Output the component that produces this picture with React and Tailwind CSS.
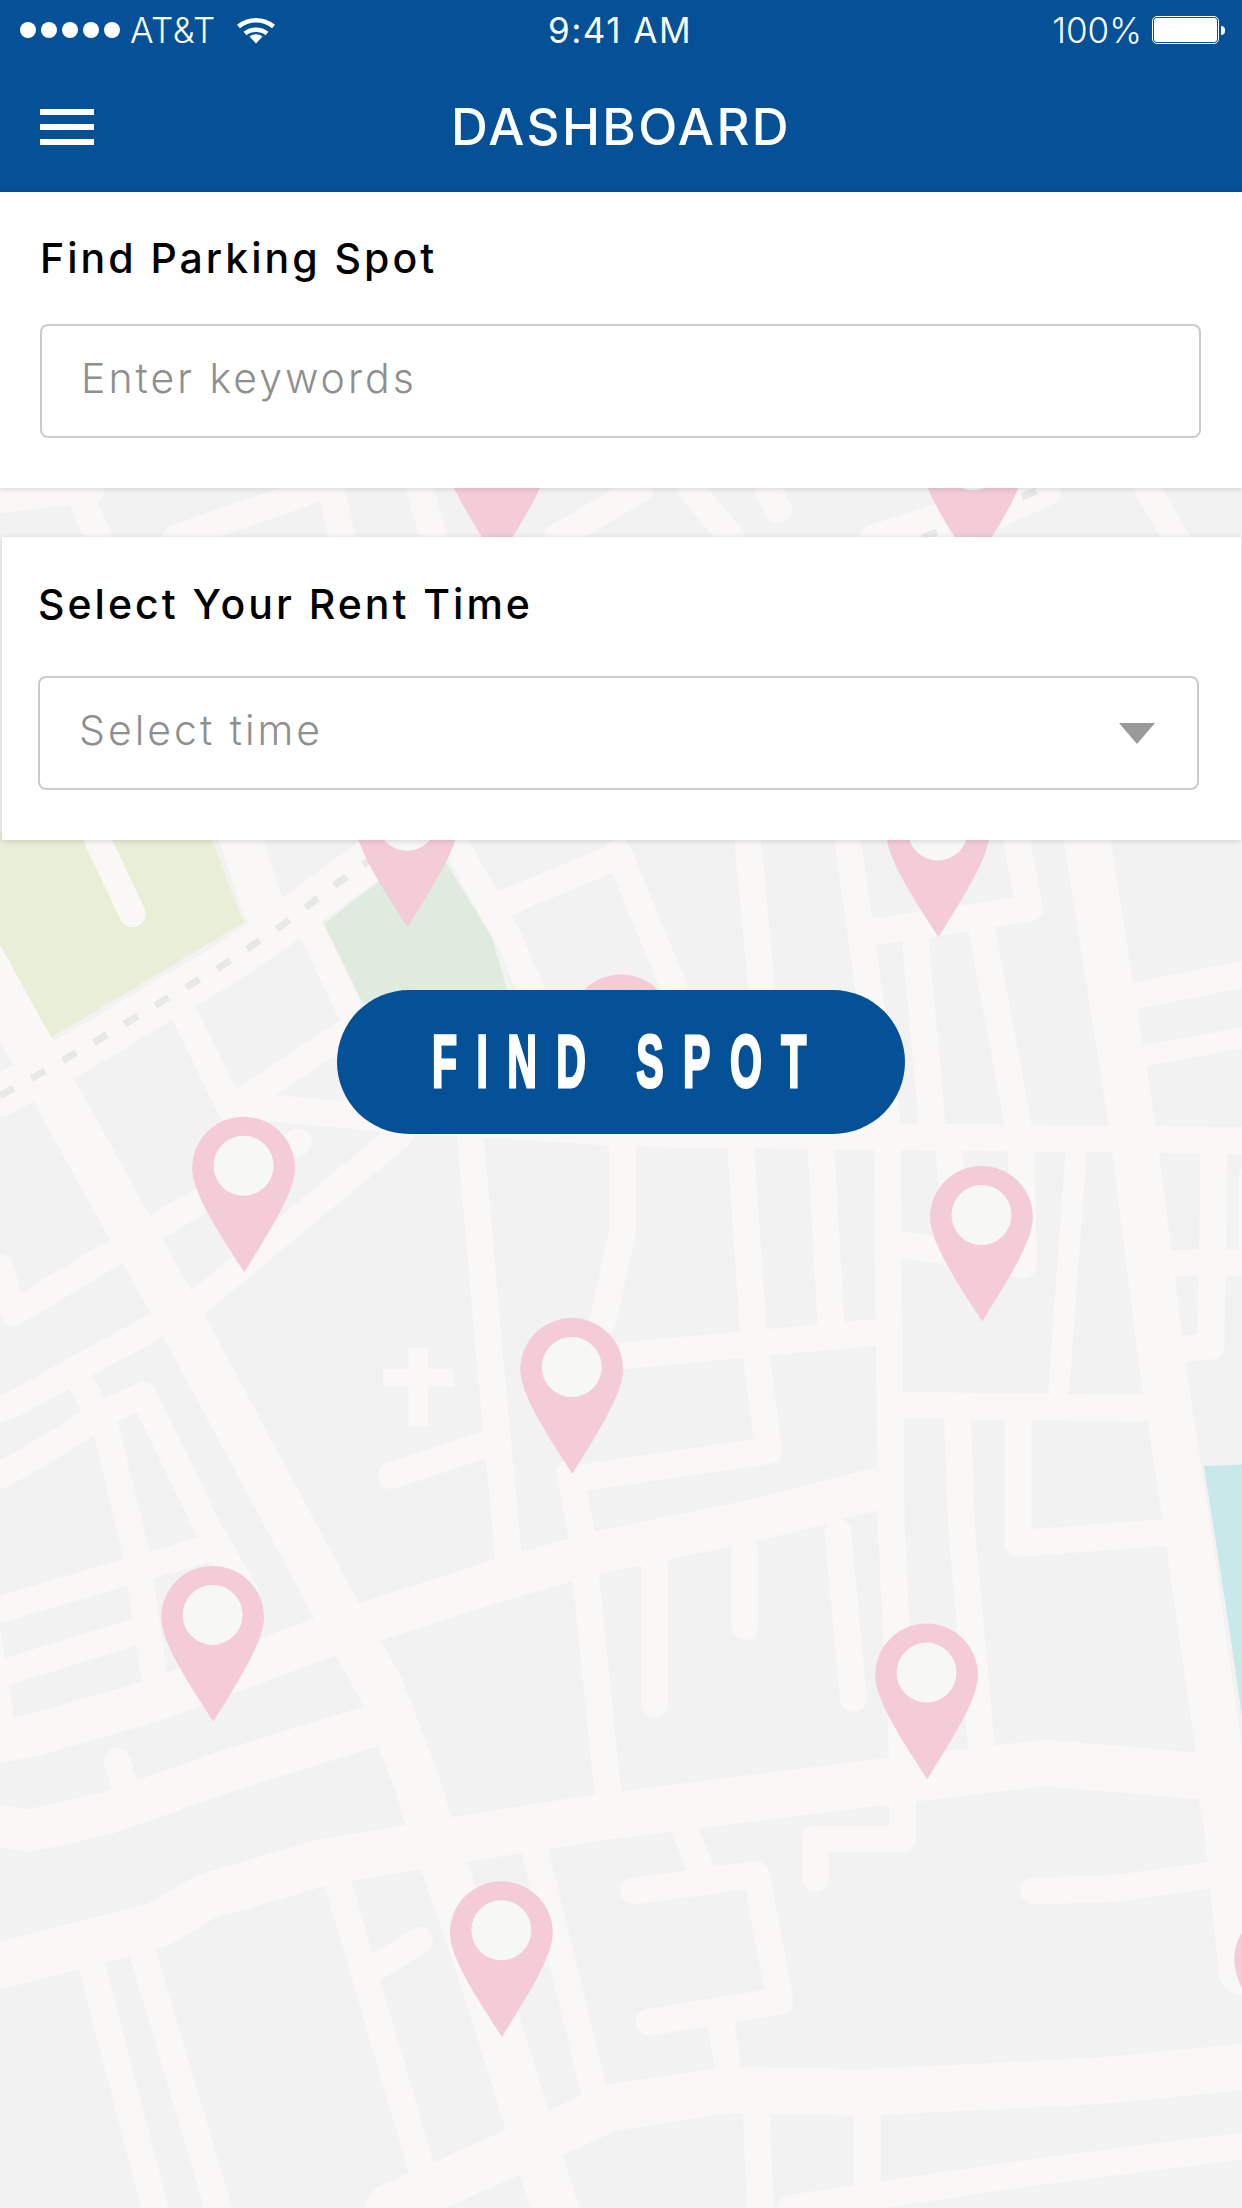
const thin = [
  [[764, 820], [752, 985]],
  [[812, 750], [882, 737]],
]

const narrow = [
  // upper area
  [[69, 596], [94, 649]],
  [[132, 722], [163, 786]],
  [[222, 662], [248, 717]],
  [[165, 787], [262, 722]],
  [[284, 806], [127, 936]],
  [[322, 597], [362, 668], [377, 703]],
  [[439, 605], [478, 700]],
  [[439, 608], [357, 642]],
  [[531, 597], [541, 703]],
  [[602, 597], [617, 703], [630, 795]],
  [[620, 662], [731, 645], [722, 597]],
  [[650, 668], [662, 798]],
  [[697, 659], [723, 799]],
  [[806, 707], [882, 692]],
  // horizontal below the button
  [[170, 785], [260, 793], [450, 805], [882, 810]],
  // verticals in the middle
  [[334, 807], [348, 966], [361, 1105]],
  [[442, 811], [442, 875], [428, 938]],
  [[526, 815], [535, 945]],
  [[537, 963], [546, 1030], [416, 1049]],
  [[583, 815], [590, 939]],
  [[630, 818], [633, 1087], [641, 1248]],
  [[674, 818], [679, 875]],
  [[641, 884], [727, 898], [725, 820]],
  [[439, 963], [624, 946]],
  [[641, 998], [816, 1000]],
  [[832, 897], [882, 897]],
  [[862, 820], [860, 956], [838, 958]],
  [[889, 836], [889, 890]],
  [[680, 1008], [683, 1087], [697, 1241]],
  [[723, 1008], [723, 1096], [832, 1088]],
  [[278, 1048], [344, 1026]],
  [[405, 1046], [413, 1090]],
  [[416, 1120], [432, 1277]],
  [[465, 1113], [465, 1210]],
  [[529, 1100], [529, 1155]],
  [[595, 1088], [606, 1206]],
  // left side
  [[0, 900], [10, 932], [212, 811]],
  [[0, 1048], [20, 1037], [62, 1011], [79, 1001], [102, 991], [147, 1084], [175, 1132]],
  [[0, 1001], [14, 995], [62, 968], [110, 942]],
  [[57, 981], [75, 1014], [97, 1104], [109, 1188]],
  [[0, 1143], [91, 1116], [147, 1100]],
  [[5, 1187], [102, 1157]],
  [[-10, 1153], [0, 1217]],
  [[83, 1251], [91, 1276]],
  // lower area
  [[66, 1399], [110, 1568]],
  [[101, 1386], [155, 1568]],
  [[239, 1334], [301, 1546]],
  [[315, 1325], [371, 1504], [399, 1568]],
  [[380, 1315], [422, 1485]],
  [[264, 1399], [298, 1378]],
  [[450, 1343], [537, 1331], [554, 1421], [461, 1436]],
  [[487, 1301], [498, 1328]],
  [[512, 1437], [517, 1468]],
  [[579, 1334], [579, 1306], [641, 1306], [641, 1280]],
  [[734, 1343], [793, 1341], [872, 1330]],
  [[861, 1280], [882, 1370]],
  [[537, 1501], [540, 1568]],
  [[616, 1503], [616, 1556]],
  [[562, 1568], [731, 1543], [882, 1524]],
  // strip between the two cards
  [[0, 355], [65, 347]],
  [[55, 347], [70, 382]],
  [[125, 382], [225, 347]],
  [[235, 347], [243, 382]],
  [[298, 347], [308, 382]],
  [[395, 382], [455, 347]],
  [[490, 347], [520, 382]],
  [[545, 347], [553, 362]],
  [[620, 382], [730, 347]],
  [[815, 347], [835, 382]],
]

const mid = [
  [[169, 590], [187, 644]],
  [[0, 1237], [24, 1232], [111, 1207], [237, 1160], [355, 1122], [422, 1103], [534, 1080], [620, 1058]],
  [[0, 1297], [21, 1300], [78, 1287], [166, 1256], [260, 1227], [272, 1224]],
  [[0, 778], [24, 765], [69, 739], [112, 713], [156, 687], [199, 658], [240, 627], [262, 611]],
]

const wide = [
  [[-15, 678], [42, 781], [127, 935], [238, 1142], [270, 1198], [296, 1266], [304, 1293], [337, 1386], [394, 1568]],
  [[0, 1396], [112, 1367], [146, 1347], [231, 1322], [292, 1312], [422, 1291], [630, 1265], [742, 1252], [861, 1262], [882, 1263]],
  [[276, 1568], [354, 1533], [433, 1497], [517, 1484], [613, 1486], [776, 1478], [882, 1468]],
  [[771, 590], [804, 799], [825, 966], [840, 1065], [866, 1245], [882, 1400]],
]

const pins = [
  [289, 548], [666, 555], [441, 692],
  [173, 793], [697, 828], [406, 936],
  [151, 1112], [658, 1153], [356, 1336], [913, 1355],
  [353, 288], [691, 292],
]

const toPoints = (line) => line.map((p) => p.join(',')).join(' ')

const Roads = ({ lines, width }) =>
  lines.map((line, i) => <polyline key={i} points={toPoints(line)} strokeWidth={width} />)

const MapBackground = () => (
  <svg viewBox="0 0 882 1568" className="absolute inset-0 h-full w-full" preserveAspectRatio="none">
    <rect width="882" height="1568" fill="#f2f2f2" />
    <polygon points="0,590 148,590 173,655 36,737 0,672" fill="#e9eed6" />
    <polygon points="230,656 269,626 317,613 349,665 360,703 258,713" fill="#e0ebdf" />
    <polygon points="855,1041 882,1040 882,1219 872,1150" fill="#c8e8e9" />
    <g fill="none" stroke="#f9f8f6" strokeLinecap="round" strokeLinejoin="round">
      <Roads lines={thin} width={15} />
      <Roads lines={narrow} width={19} />
      <Roads lines={mid} width={30} />
      <Roads lines={wide} width={33} />
      <polyline points="660,382 740,347" strokeWidth="27" />
    </g>
    <g fill="none" stroke="#e8e8e6" strokeWidth="5">
      <polyline points={toPoints(mid[3])} strokeDasharray="11 14.5" />
      <polyline points="655,382 740,347" strokeDasharray="11 14.5" />
    </g>
    <rect x="272" y="972" width="50" height="13" fill="#f9f8f6" />
    <rect x="290" y="957" width="14" height="56" fill="#f9f8f6" />
    {pins.map(([x, y], i) => (
      <g key={i} transform={`translate(${x} ${y})`}>
        <path d="M0.5 110.5C-18 82-36.5 54-36.5 36.5A36.5 36.5 0 0 1 36.5 36.5C36.5 54 18 82 0.5 110.5Z" fill="#f3ccd8" />
        <circle cx="0" cy="34.8" r="21.3" fill="#f7f8f3" />
      </g>
    ))}
  </svg>
)

const StatusBar = () => (
  <div className="relative flex h-[60px] items-center justify-between text-[35px] font-light leading-none text-white">
    <div className="flex items-center pl-[20px]">
      <div className="flex gap-[5px]">
        <span className="h-4 w-4 rounded-full bg-white" />
        <span className="h-4 w-4 rounded-full bg-white" />
        <span className="h-4 w-4 rounded-full bg-white" />
        <span className="h-4 w-4 rounded-full bg-white" />
        <span className="h-4 w-4 rounded-full bg-white" />
      </div>
      <span className="ml-[10px] tracking-[0.5px]">AT&amp;T</span>
      <svg viewBox="0 0 38 27" className="ml-[21px] h-[27px] w-[38px]" fill="none" stroke="#fff" strokeWidth="4.5">
        <path d="M1.5 9.5C11.5 1 26.5 1 36.5 9.5" />
        <path d="M8 16.5C14 11.5 24 11.5 30 16.5" />
        <path d="M12.5 19.5L19 26.5L25.5 19.5C21.5 16.5 16.5 16.5 12.5 19.5Z" fill="#fff" stroke="none" />
      </svg>
    </div>
    <span className="absolute left-[548px] font-normal tracking-[1.5px]">9:41 AM</span>
    <div className="flex items-center pr-[17px]">
      <span>100%</span>
      <div className="ml-[10px] flex h-[28px] w-[67px] rounded-[5px] border border-white p-[1px]">
        <span className="w-full rounded-[3px] bg-white" />
      </div>
      <span className="ml-[2px] h-[9px] w-[4px] rounded-r-full bg-white" />
    </div>
  </div>
)

const Field = ({ label, placeholder, arrow, gap }) => (
  <>
    <div className="text-[41px] font-medium leading-none tracking-[3px] text-black">{label}</div>
    <div className={`${gap} flex h-[114px] items-center justify-between rounded-[8px] border-2 border-[#cbcbcb] bg-white pl-[39px] pr-[42px] text-[41px] font-light leading-none tracking-[3px] text-[#8f8f8f]`}>
      <span className="pb-[5px]">{placeholder}</span>
      {arrow && <span className="h-0 w-0 border-x-[18px] border-t-[21px] border-x-transparent border-t-[#999999]" />}
    </div>
  </>
)

export default function App() {
  return (
    <div className="relative h-[2208px] w-[1242px] overflow-hidden bg-[#f2f2f2] font-['Inter','Liberation_Sans',sans-serif]">
      <MapBackground />
      <div className="relative flex flex-col">
        <header className="h-[192px] bg-[#045198]">
          <StatusBar />
          <div className="relative flex h-[132px] items-center justify-center">
            <div className="absolute left-[40px] top-[49px] flex w-[54px] flex-col gap-[9px]">
              <span className="h-[6px] bg-white" />
              <span className="h-[6px] bg-white" />
              <span className="h-[6px] bg-white" />
            </div>
            <h1 className="text-[51px] font-medium leading-none tracking-[2.4px] text-white">DASHBOARD</h1>
          </div>
        </header>

        <section className="h-[296px] bg-white pl-[40px] pr-[41px] pt-[46px] shadow-[0_1px_6px_rgba(0,0,0,0.15)]">
          <Field label="Find Parking Spot" placeholder="Enter keywords" gap="mt-[45px]" />
        </section>

        <section className="ml-[2px] mt-[49px] h-[303px] w-[1239px] bg-white pl-[36px] pr-[42px] pt-[47px] shadow-[0_1px_6px_rgba(0,0,0,0.15)]">
          <Field label="Select Your Rent Time" placeholder="Select time" arrow gap="mt-[51px]" />
        </section>

        <button className="ml-[337px] mt-[150px] flex h-[144px] w-[568px] items-center justify-center rounded-full bg-[#045198] pl-[16px] font-['Liberation_Sans',sans-serif] text-[74px] font-bold leading-none tracking-[35px] text-white [-webkit-text-stroke:3px_white]">
          <span className="block scale-x-[0.555] whitespace-nowrap">FIND SPOT</span>
        </button>
      </div>
    </div>
  )
}
